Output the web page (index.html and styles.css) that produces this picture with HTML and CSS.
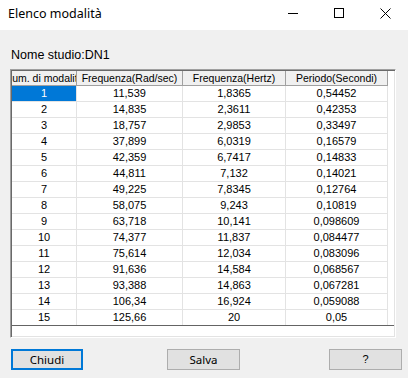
FILE: index.html
```html
<!DOCTYPE html>
<html>
<head>
<meta charset="utf-8">
<link rel="stylesheet" href="styles.css">
</head>
<body>
<div class="window">
  <div class="titlebar">
    <span class="title">Elenco modalità</span>
    <div class="controls">
      <span class="ctl"><svg width="10" height="10" viewBox="0 0 10 10"><path d="M0 5.5H10" stroke="#000" stroke-width="1"/></svg></span>
      <span class="ctl"><svg width="10" height="10" viewBox="0 0 10 10"><rect x="0.5" y="0.5" width="9" height="9" fill="none" stroke="#000" stroke-width="1"/></svg></span>
      <span class="ctl"><svg width="11" height="11" viewBox="0 0 11 11"><path d="M0.5 0.5L10.5 10.5M10.5 0.5L0.5 10.5" stroke="#000" stroke-width="1"/></svg></span>
    </div>
  </div>
  <div class="client">
    <div class="label">Nome studio:DN1</div>
    <div class="grid">
      <div class="table-wrap">
        <div class="row head">
          <div class="hc"><span>Num. di modalità</span></div>
          <div class="hc"><span>Frequenza(Rad/sec)</span></div>
          <div class="hc"><span>Frequenza(Hertz)</span></div>
          <div class="hc"><span>Periodo(Secondi)</span></div>
        </div>
        <div class="row"><div class="c sel">1</div><div class="c">11,539</div><div class="c">1,8365</div><div class="c">0,54452</div></div>
        <div class="row"><div class="c">2</div><div class="c">14,835</div><div class="c">2,3611</div><div class="c">0,42353</div></div>
        <div class="row"><div class="c">3</div><div class="c">18,757</div><div class="c">2,9853</div><div class="c">0,33497</div></div>
        <div class="row"><div class="c">4</div><div class="c">37,899</div><div class="c">6,0319</div><div class="c">0,16579</div></div>
        <div class="row"><div class="c">5</div><div class="c">42,359</div><div class="c">6,7417</div><div class="c">0,14833</div></div>
        <div class="row"><div class="c">6</div><div class="c">44,811</div><div class="c">7,132</div><div class="c">0,14021</div></div>
        <div class="row"><div class="c">7</div><div class="c">49,225</div><div class="c">7,8345</div><div class="c">0,12764</div></div>
        <div class="row"><div class="c">8</div><div class="c">58,075</div><div class="c">9,243</div><div class="c">0,10819</div></div>
        <div class="row"><div class="c">9</div><div class="c">63,718</div><div class="c">10,141</div><div class="c">0,098609</div></div>
        <div class="row"><div class="c">10</div><div class="c">74,377</div><div class="c">11,837</div><div class="c">0,084477</div></div>
        <div class="row"><div class="c">11</div><div class="c">75,614</div><div class="c">12,034</div><div class="c">0,083096</div></div>
        <div class="row"><div class="c">12</div><div class="c">91,636</div><div class="c">14,584</div><div class="c">0,068567</div></div>
        <div class="row"><div class="c">13</div><div class="c">93,388</div><div class="c">14,863</div><div class="c">0,067281</div></div>
        <div class="row"><div class="c">14</div><div class="c">106,34</div><div class="c">16,924</div><div class="c">0,059088</div></div>
        <div class="row last"><div class="c">15</div><div class="c">125,66</div><div class="c">20</div><div class="c">0,05</div></div>
      </div>
    </div>
    <div class="buttons">
      <button class="btn default">Chiudi</button>
      <button class="btn b-salva">Salva</button>
      <button class="btn b-help">?</button>
    </div>
  </div>
</div>
</body>
</html>
```

FILE: styles.css
```css
html, body {
  margin: 0;
  padding: 0;
}
body {
  width: 408px;
  height: 378px;
  overflow: hidden;
  background: #f0f0f0;
}
.window {
  width: 408px;
  height: 378px;
  display: flex;
  flex-direction: column;
}
.titlebar {
  height: 30px;
  background: #ffffff;
  display: flex;
  align-items: center;
  flex-shrink: 0;
}
.title {
  padding-left: 8px;
  font-family: "Noto Sans", "Open Sans", sans-serif;
  font-size: 12.5px;
  color: #000;
  line-height: 16px;
  margin-top: -2px;
}
.controls {
  margin-left: auto;
  display: flex;
  height: 30px;
}
.ctl {
  width: 46px;
  height: 30px;
  display: flex;
  align-items: center;
  justify-content: center;
  margin-top: -2px;
}
.ctl svg { display: block; }
.client {
  flex: 1;
  background: #f0f0f0;
}
.label {
  margin-top: 19px;
  padding-left: 11px;
  font-family: "Liberation Sans", Arial, sans-serif;
  font-size: 12.5px;
  line-height: 13px;
  height: 13px;
  color: #000;
}
.grid {
  margin-top: 7px;
  margin-left: 10px;
  width: 386px;
  height: 269px;
  box-sizing: border-box;
  border: 1px solid;
  border-color: #a0a0a0 #ffffff #ffffff #a0a0a0;
  box-shadow: inset 1px 1px 0 #696969, inset -1px -1px 0 #e3e3e3;
  padding: 1px;
  background: #ffffff;
}
.table-wrap {
  border-bottom: 1px solid #646464;
  background: #ffffff;
}
.row {
  display: grid;
  grid-template-columns: 65px 106px 103px 102px;
  height: 16px;
  font-family: "Liberation Sans", Arial, sans-serif;
  font-size: 11px;
  color: #000;
}
.row.head { height: 15px; font-size: 10.5px; }
.row.last { height: 15px; }
.hc {
  box-sizing: border-box;
  background: #f0f0f0;
  border-right: 1px solid #a0a0a0;
  border-bottom: 1px solid #a0a0a0;
  display: flex;
  justify-content: center;
  align-items: center;
  overflow: hidden;
  white-space: nowrap;
  line-height: 14px;
}
.hc span { flex-shrink: 0; }
.c {
  box-sizing: border-box;
  border-right: 1px solid #e3e3e3;
  border-bottom: 1px solid #e3e3e3;
  text-align: center;
  line-height: 15px;
  white-space: nowrap;
}
.row.last .c { border-bottom: none; }
.c.sel {
  background: #0078d7;
  color: #ffffff;
}
.buttons {
  display: flex;
  margin-top: 11px;
  padding-left: 11px;
}
.btn {
  box-sizing: border-box;
  width: 73px;
  height: 21px;
  margin: 0;
  padding: 0;
  background: #e1e1e1;
  border: 1px solid #adadad;
  font-family: "Noto Sans", "Open Sans", sans-serif;
  font-size: 11.5px;
  color: #000;
  line-height: 17px;
}
.btn.default {
  width: 72px;
  border: 2px solid #0078d7;
}
.b-salva { margin-left: 84px; }
.b-help {
  margin-left: 89px;
  font-family: "Liberation Sans", Arial, sans-serif;
  font-size: 11px;
}
```
